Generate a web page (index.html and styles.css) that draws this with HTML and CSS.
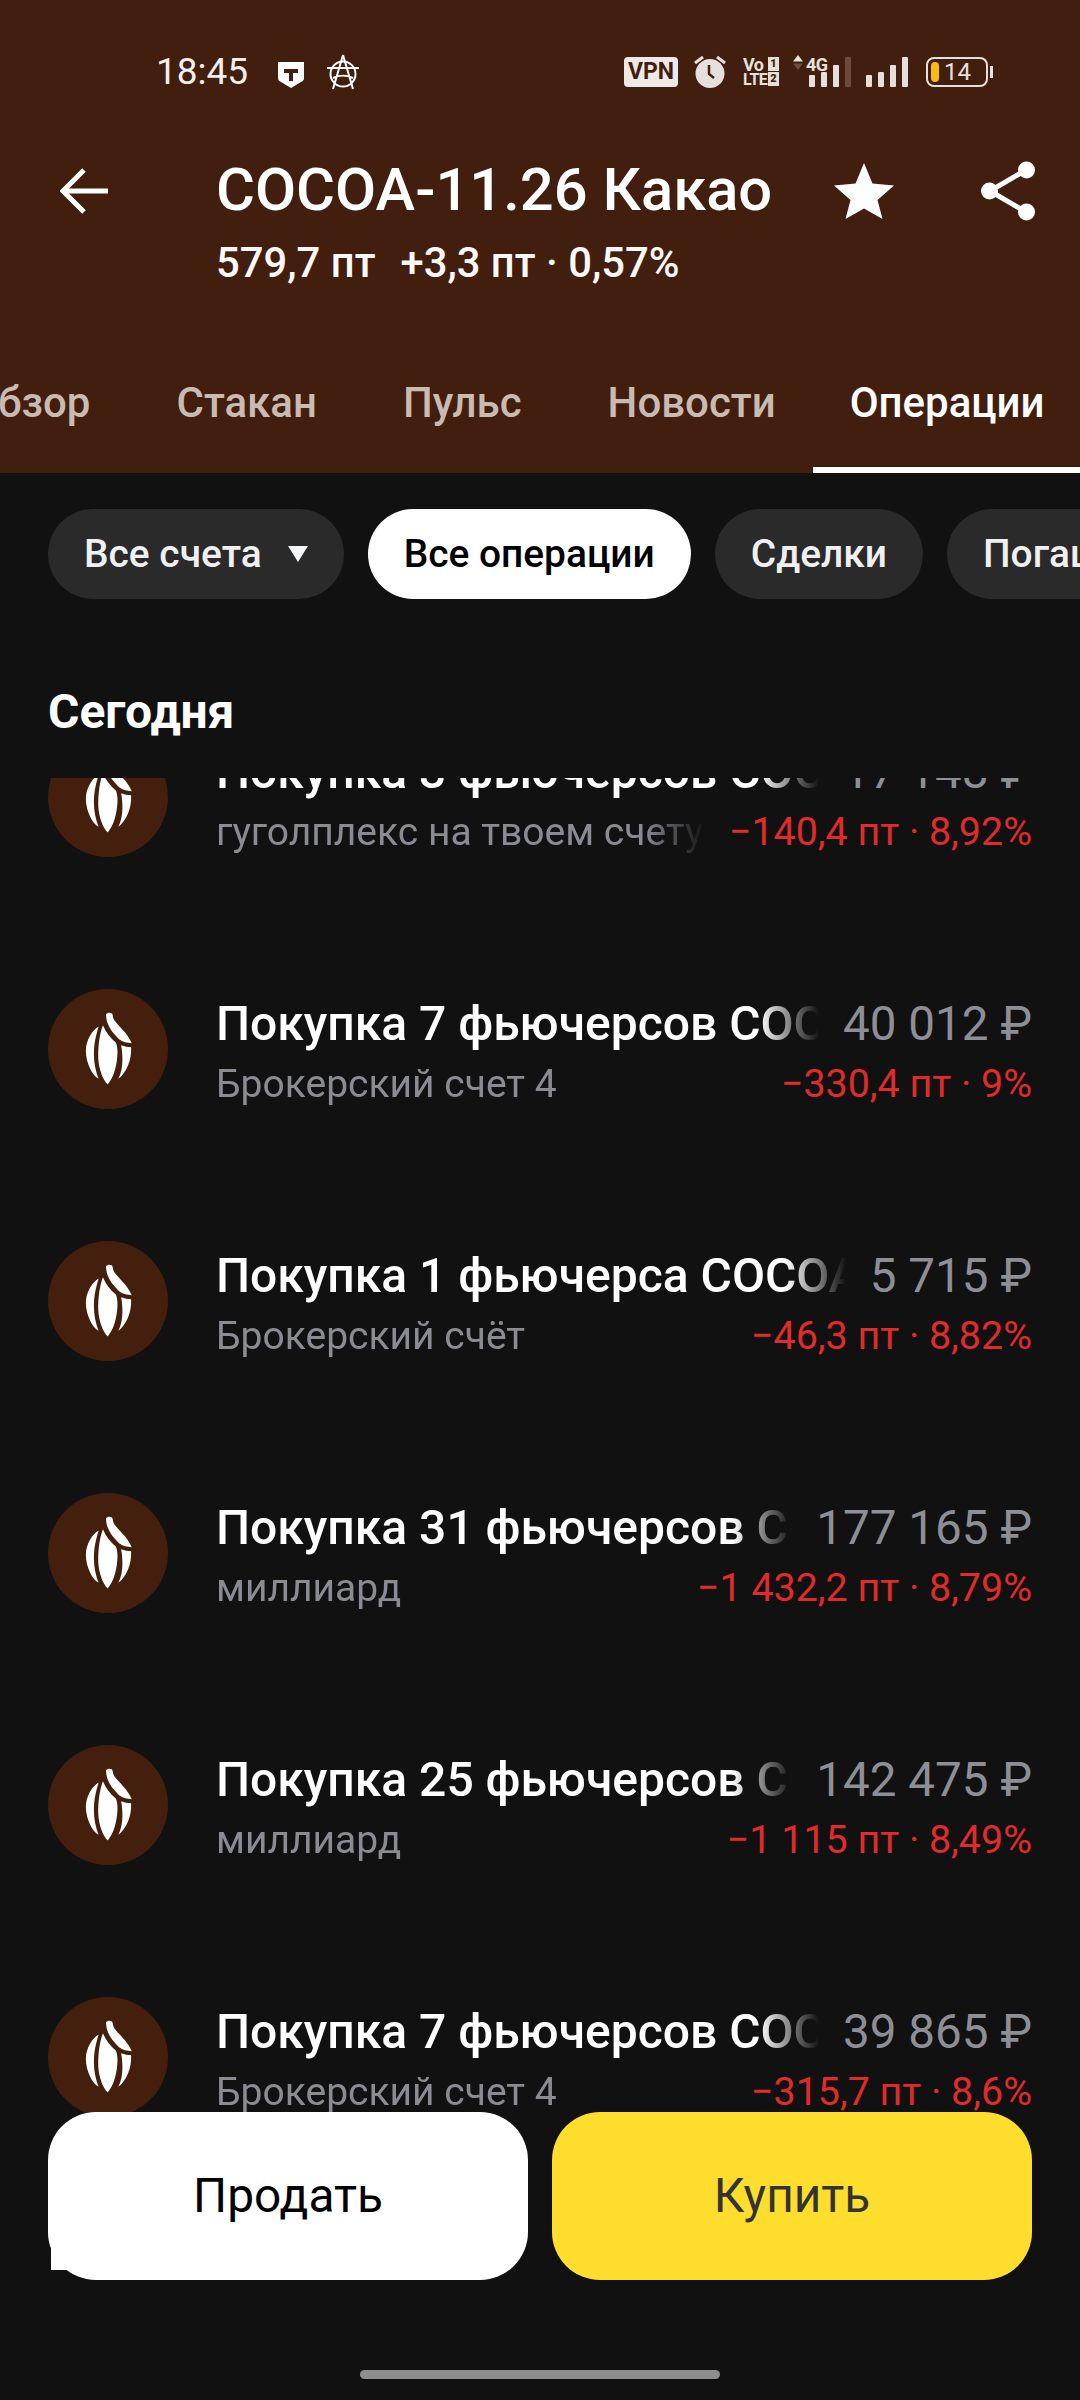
FILE: index.html
```html
<!DOCTYPE html>
<html lang="ru">
<head>
<meta charset="utf-8">
<title>COCOA-11.26 Какао</title>
<link rel="stylesheet" href="styles.css">
</head>
<body>
<svg class="defs" width="0" height="0" aria-hidden="true">
  <symbol id="cocoa" viewBox="55 28 358 358">
    <circle cx="234" cy="207" r="179" fill="#441f0d"/>
    <path fill="#fff" d="M228 104c2-6 14-7 18-3 4 6 1 12 7 20 10 16 38 36 52 69-14-1-30-5-38-12-18-18-30-34-35-50-3-8-3-16-4-24z"/>
    <path fill="#fff" d="M219 136c8 20 22 38 39 52 4 12 5 24 4 38-2 34-12 68-29 87-14-14-26-46-28-78-1-36 4-74 14-99z"/>
    <path fill="#fff" d="M206 140c-8 28-14 50-14 84 0 26 6 52 14 72-18-10-38-46-38-84 0-30 18-60 38-72z"/>
    <path fill="#fff" d="M273 196c10 4 20 5 30 6 2 38-14 76-38 94 8-16 12-36 12-56 0-16-1-30-4-44z"/>
  </symbol>
</svg>
<div class="screen">
  <header class="header">
    <div class="status">
      <span class="time">18:45</span>
      <svg class="ic-shield" viewBox="0 0 26 26"><path fill="#fff" d="M0 0h26v16c0 2-1 3-3 4l-10 6-10-6c-2-1-3-2-3-4z"/><path fill="#411e0d" d="M6 7h14v4h-5v8h-4v-8H6z"/></svg>
      <svg class="ic-anarchy" viewBox="0 0 34 36"><g fill="none" stroke="#fff" stroke-width="2"><circle cx="17" cy="20" r="12.5"/><path d="M17 1 7 35M17 1l10 34M1 14l32 0M7 24c6-3 14-3 20 0"/></g></svg>
      <span class="spacer"></span>
      <span class="vpn">VPN</span>
      <svg class="ic-clock" viewBox="0 0 32 33"><circle cx="16" cy="18.500" r="14.500" fill="#e6e0dd"/><path d="M1 8l8-6M31 8l-8-6" stroke="#e6e0dd" stroke-width="3" fill="none"/><path d="M15 10v9l5 4" stroke="#411e0d" stroke-width="2.500" fill="none"/></svg>
      <span class="volte"><span class="vo">Vo<b>1</b></span><span class="lte">LTE<b>2</b></span></span>
      <span class="net">
        <span class="net-top"><svg class="ic-updown" viewBox="0 0 10 15"><path fill="#e6e0dd" d="M5 0l5 6.500H0z"/><path fill="#6d4a39" d="M0 8.500h10L5 15z"/></svg><span class="g4">4G</span></span>
        <span class="bars bars-a"><i class="b1"></i><i class="b2"></i><i class="b3"></i><i class="b4 dim"></i></span>
      </span>
      <span class="bars bars-b"><i class="b1"></i><i class="b2"></i><i class="b3"></i><i class="b4"></i></span>
      <span class="battery"><i class="fill"></i><span class="pct">14</span></span><i class="nub"></i>
    </div>
    <div class="toolbar">
      <svg class="ic-back" viewBox="0 0 48 46"><path d="M24 2 3 23l21 21M3 23h45" fill="none" stroke="#fff" stroke-width="5"/></svg>
      <div class="heading">
        <h1 class="title">COCOA-11.26 Какао</h1>
        <p class="quote">579,7 пт<span class="change">+3,3 пт · 0,57%</span></p>
      </div>
      <svg class="ic-star" viewBox="0 0 60 56"><path fill="#fff" d="M30 0l8.500 20.500L60 22.500 43.500 37l5 19L30 45.500 11.500 56l5-19L0 22.500l21.500-2z"/></svg>
      <svg class="ic-share" viewBox="0 0 54 60"><path d="M45 9 9 30l36 21" fill="none" stroke="#fff" stroke-width="5"/><circle cx="45.500" cy="9" r="8.500" fill="#fff"/><circle cx="8.500" cy="30" r="8.500" fill="#fff"/><circle cx="45.500" cy="51" r="8.500" fill="#fff"/></svg>
    </div>
    <nav class="tabs">
      <span class="tab first">Обзор</span>
      <span class="tab">Стакан</span>
      <span class="tab">Пульс</span>
      <span class="tab news">Новости</span>
      <span class="tab active">Операции</span>
    </nav>
  </header>
  <div class="chips">
    <span class="chip">Все счета<i class="caret"></i></span>
    <span class="chip on">Все операции</span>
    <span class="chip">Сделки</span>
    <span class="chip">Погашения</span>
  </div>
  <h2 class="day">Сегодня</h2>
  <div class="list">
    <div class="rows">
      <article class="row">
        <svg class="pod"><use href="#cocoa"/></svg>
        <div class="info">
          <div class="line"><span class="name">Покупка 3 фьючерсов COCOA-11.26</span><span class="sum">17 148 ₽</span></div>
          <div class="line sub"><span class="acct">гуголплекс на твоем счету</span><span class="pl">−140,4 пт · 8,92%</span></div>
        </div>
      </article>
      <article class="row">
        <svg class="pod"><use href="#cocoa"/></svg>
        <div class="info">
          <div class="line"><span class="name">Покупка 7 фьючерсов COCOA-11.26</span><span class="sum">40 012 ₽</span></div>
          <div class="line sub"><span class="acct">Брокерский счет 4</span><span class="pl">−330,4 пт · 9%</span></div>
        </div>
      </article>
      <article class="row">
        <svg class="pod"><use href="#cocoa"/></svg>
        <div class="info">
          <div class="line"><span class="name">Покупка 1 фьючерса COCOA-11.26</span><span class="sum">5 715 ₽</span></div>
          <div class="line sub"><span class="acct">Брокерский счёт</span><span class="pl">−46,3 пт · 8,82%</span></div>
        </div>
      </article>
      <article class="row">
        <svg class="pod"><use href="#cocoa"/></svg>
        <div class="info">
          <div class="line"><span class="name">Покупка 31 фьючерсов COCOA-11.26</span><span class="sum">177 165 ₽</span></div>
          <div class="line sub"><span class="acct">миллиард</span><span class="pl">−1 432,2 пт · 8,79%</span></div>
        </div>
      </article>
      <article class="row">
        <svg class="pod"><use href="#cocoa"/></svg>
        <div class="info">
          <div class="line"><span class="name">Покупка 25 фьючерсов COCOA-11.26</span><span class="sum">142 475 ₽</span></div>
          <div class="line sub"><span class="acct">миллиард</span><span class="pl">−1 115 пт · 8,49%</span></div>
        </div>
      </article>
      <article class="row">
        <svg class="pod"><use href="#cocoa"/></svg>
        <div class="info">
          <div class="line"><span class="name">Покупка 7 фьючерсов COCOA-11.26</span><span class="sum">39 865 ₽</span></div>
          <div class="line sub"><span class="acct">Брокерский счет 4</span><span class="pl">−315,7 пт · 8,6%</span></div>
        </div>
      </article>
    </div>
  </div>
  <div class="actions">
    <button class="btn sell">Продать</button>
    <button class="btn buy">Купить</button>
  </div>
  <i class="speck"></i>
  <i class="homebar"></i>
</div>
</body>
</html>
```
FILE: styles.css
```css
* { box-sizing: border-box; }
html, body { margin: 0; padding: 0; background: #111112; }
body { font-family: Roboto, "Noto Sans", sans-serif; color: #fff; }
.defs { position: absolute; }
.screen { position: relative; width: 1080px; height: 2400px; overflow: hidden; display: flex; flex-direction: column; background: #111112; }

.header { height: 473px; background: #411e0d; display: flex; flex-direction: column; flex: none; }
.status { height: 54px; margin-top: 54px; padding-left: 156px; display: flex; align-items: flex-start; position: relative; flex: none; }
.time { font-size: 37px; line-height: 36px; margin-right: 30px; color: #f4efec; width: 92px; }
.ic-shield { width: 26px; height: 26px; margin-top: 8px; margin-right: 22px; }
.ic-anarchy { width: 34px; height: 36px; }
.spacer { flex: 1; }
.vpn { width: 54px; height: 30px; margin-top: 3px; margin-right: 16px; background: #eee9e6; color: #411e0d; border-radius: 4px; font: 700 23px/30px Roboto, sans-serif; text-align: center; }
.ic-clock { width: 32px; height: 33px; margin-top: 1px; margin-right: 17px; }
.volte { width: 36px; height: 30px; margin-top: 3px; margin-right: 14px; display: flex; flex-direction: column; color: #e6e0dd; font: 700 16px/15px Roboto, sans-serif; }
.vo, .lte { display: flex; justify-content: space-between; white-space: nowrap; letter-spacing: -0.5px; }
.vo { font-size: 18px; }
.volte b { background: #e6e0dd; color: #411e0d; width: 11px; height: 14px; font-size: 11px; line-height: 14px; text-align: center; letter-spacing: 0; }
.net { position: relative; width: 58px; height: 33px; margin-top: 1px; margin-right: 15px; }
.net-top { position: absolute; left: 0; top: 0; display: flex; gap: 3px; }
.ic-updown { width: 10px; height: 15px; }
.g4 { color: #e6e0dd; font: 700 18px/19px Roboto, sans-serif; letter-spacing: -0.5px; }
.bars { display: flex; gap: 6px; align-items: flex-end; height: 30px; }
.bars i { width: 6px; background: #e6e0dd; border-radius: 1px; display: block; }
.bars-a { position: absolute; left: 16px; bottom: 1px; }
.bars-b { margin-top: 3px; margin-right: 18px; }
.b1 { height: 12px; } .b2 { height: 15px; } .b3 { height: 22px; } .b4 { height: 30px; }
.bars i.dim { background: #6d4a39; }
.battery { width: 62px; height: 30px; margin-top: 3px; border: 2px solid #e6e0dd; border-radius: 8px; display: flex; align-items: center; padding-left: 3px; gap: 5px; }
.fill { width: 8px; height: 20px; background: #fdb913; border-radius: 4px; display: block; }
.pct { color: #e6e0dd; font-size: 24px; line-height: 24px; }
.nub { width: 3px; height: 12px; margin-top: 12px; margin-left: 2px; margin-right: 87px; background: #e6e0dd; display: block; }

.toolbar { height: 200px; display: flex; align-items: flex-start; flex: none; }
.ic-back { width: 48px; height: 46px; margin: 60px 0 0 60px; flex: none; }
.heading { margin-left: 108px; width: 618px; flex: none; }
.title { margin: 48px 0 0; font-size: 59.700px; line-height: 68px; font-weight: 500; white-space: nowrap; }
.quote { margin: 15px 0 0; font-size: 41.800px; line-height: 48px; font-weight: 500; white-space: nowrap; color: #fbf8f6; }
.change { margin-left: 25px; }
.ic-star { width: 60px; height: 56px; margin-top: 55px; flex: none; }
.ic-share { width: 54px; height: 60px; margin: 53px 0 0 87px; flex: none; }

.tabs { flex: 1; display: flex; align-items: stretch; overflow: hidden; font-size: 42px; font-weight: 500; color: #c9bab2; white-space: nowrap; }
.tab { padding: 70px 43px 0; flex: none; }
.tab.first { margin-left: -74px; }
.tab.news { padding-right: 37px; }
.tab.active { color: #fff; flex: 1; padding-left: 37px; border-bottom: 6px solid #fff; }

.chips { display: flex; gap: 24px; padding: 36px 0 0 48px; white-space: nowrap; flex: none; }
.chip { height: 90px; padding: 0 36px; border-radius: 45px; background: #2a2a2b; color: #f0f0f1; font-size: 38.900px; font-weight: 500; line-height: 88px; display: flex; flex: none; align-items: center; }
.chip.on { background: #fff; color: #000; }
.caret { width: 0; height: 0; margin-left: 26px; border-left: 10px solid transparent; border-right: 10px solid transparent; border-top: 16px solid #f5f6f7; display: block; }

.day { margin: 85px 0 0 48px; font-size: 48px; line-height: 56px; font-weight: 700; flex: none; }

.list { flex: 1; min-height: 0; overflow: hidden; margin-top: 38px; }
.rows { margin-top: -107px; }
.row { height: 252px; padding: 0 48px; display: flex; align-items: center; }
.pod { width: 120px; height: 120px; flex: none; margin-right: 48px; }
.info { flex: 1; min-width: 0; padding-top: 7px; }
.line { display: flex; gap: 24px; align-items: baseline; white-space: nowrap; }
.line.sub { margin-top: 3px; }
.name, .acct { flex: 1; min-width: 0; overflow: hidden; -webkit-mask-image: linear-gradient(to right, #000 calc(100% - 60px), transparent); mask-image: linear-gradient(to right, #000 calc(100% - 60px), transparent); }
.name { font-size: 48px; line-height: 60px; font-weight: 500; color: #fff; }
.sum { font-size: 47.600px; line-height: 60px; color: #8e8f96; }
.acct { font-size: 39px; line-height: 54px; color: #8a8b93; }
.pl { font-size: 39.400px; line-height: 54px; color: #e02b2b; }

.actions { position: absolute; left: 48px; right: 48px; top: 2112px; height: 168px; display: flex; gap: 24px; }
.btn { flex: 1; border: 0; border-radius: 48px; font-family: inherit; font-size: 47.800px; font-weight: 400; }
.sell { background: #fff; color: #000; }
.buy { background: #ffdd2d; color: #333; }
.speck { position: absolute; left: 51px; top: 2240px; width: 22px; height: 30px; background: #fff; }
.homebar { position: absolute; left: 360px; top: 2370px; width: 360px; height: 9px; border-radius: 5px; background: #8e8e8e; }
```
